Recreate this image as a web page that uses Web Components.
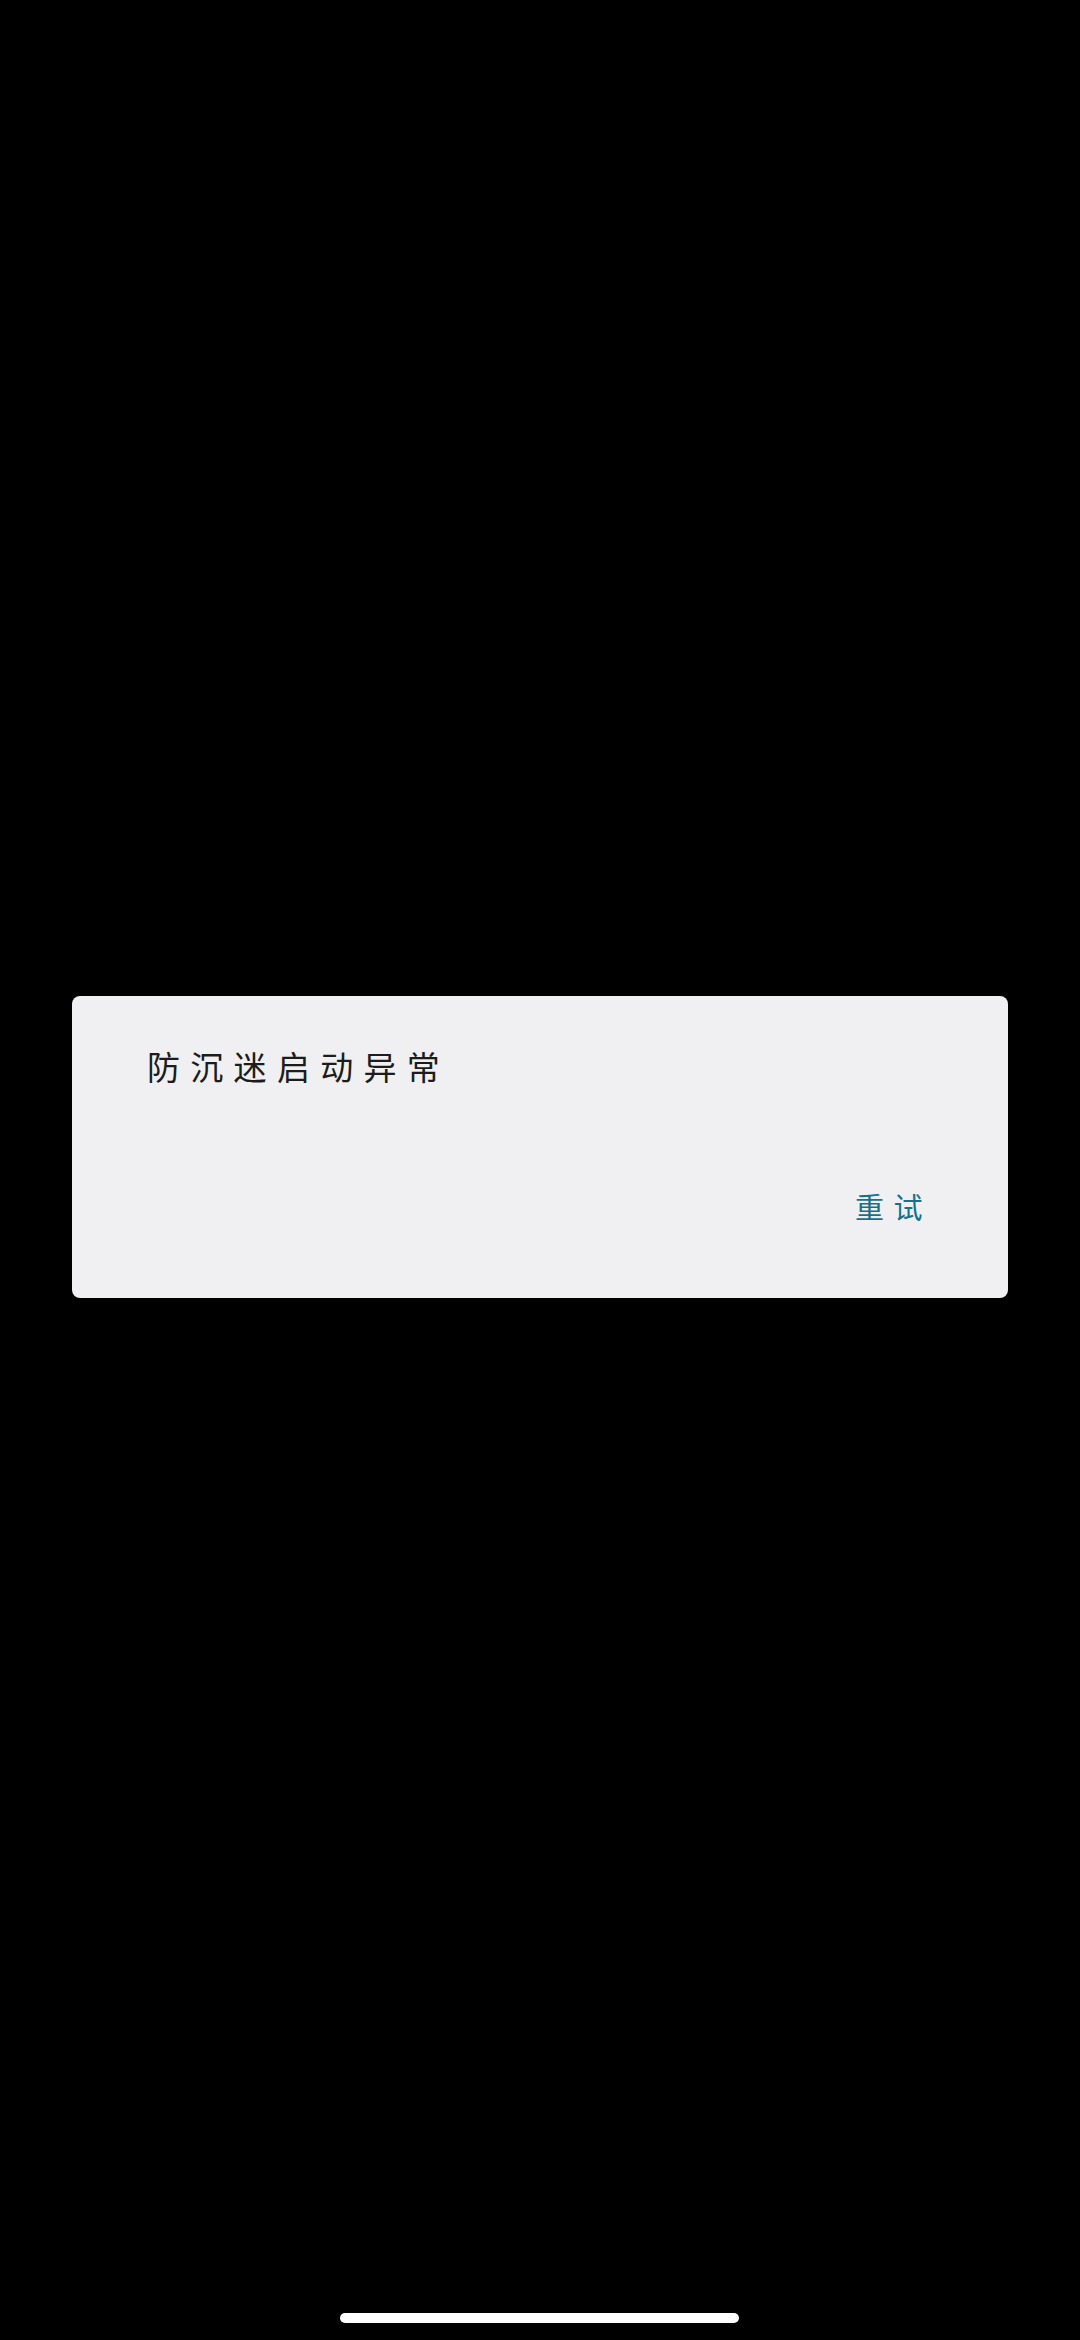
<!DOCTYPE html>
<html lang="zh">
<head>
<meta charset="UTF-8">
<title>防沉迷</title>
<style>
  html, body { margin: 0; height: 100%; background: #000; }
</style>
</head>
<body>
<app-screen>
  <alert-dialog>
    <span slot="message">防沉迷启动异常</span>
    <span slot="action">重试</span>
  </alert-dialog>
</app-screen>

<script>
class AppScreen extends HTMLElement {
  constructor() {
    super();
    this.attachShadow({ mode: "open" }).innerHTML = `
      <style>
        :host {
          display: flex;
          flex-direction: column;
          box-sizing: border-box;
          width: 1080px;
          height: 2340px;
          padding: 996px 72px 17px;
          background: #000;
        }
        .home {
          margin: auto 0 0 268px;
          width: 399px;
          height: 10px;
          border-radius: 5px;
          background: #fff;
        }
      </style>
      <slot></slot>
      <div class="home"></div>
    `;
  }
}

class AlertDialog extends HTMLElement {
  constructor() {
    super();
    this.attachShadow({ mode: "open" }).innerHTML = `
      <style>
        :host {
          display: flex;
          flex-direction: column;
          box-sizing: border-box;
          height: 302px;
          padding: 48px 76px 0 75px;
          border-radius: 8px;
          background: #f0f0f2;
          font-family: "Noto Sans CJK SC", sans-serif;
        }
        .message {
          font-size: 33px;
          line-height: 44px;
          letter-spacing: 10.3px;
          color: #1c1c1c;
        }
        .action {
          align-self: flex-end;
          margin-top: 96px;
          font-size: 29px;
          line-height: 44px;
          letter-spacing: 9.5px;
          color: #18708f;
        }
      </style>
      <div class="message"><slot name="message"></slot></div>
      <div class="action"><slot name="action"></slot></div>
    `;
  }
}

customElements.define("app-screen", AppScreen);
customElements.define("alert-dialog", AlertDialog);
</script>
</body>
</html>
